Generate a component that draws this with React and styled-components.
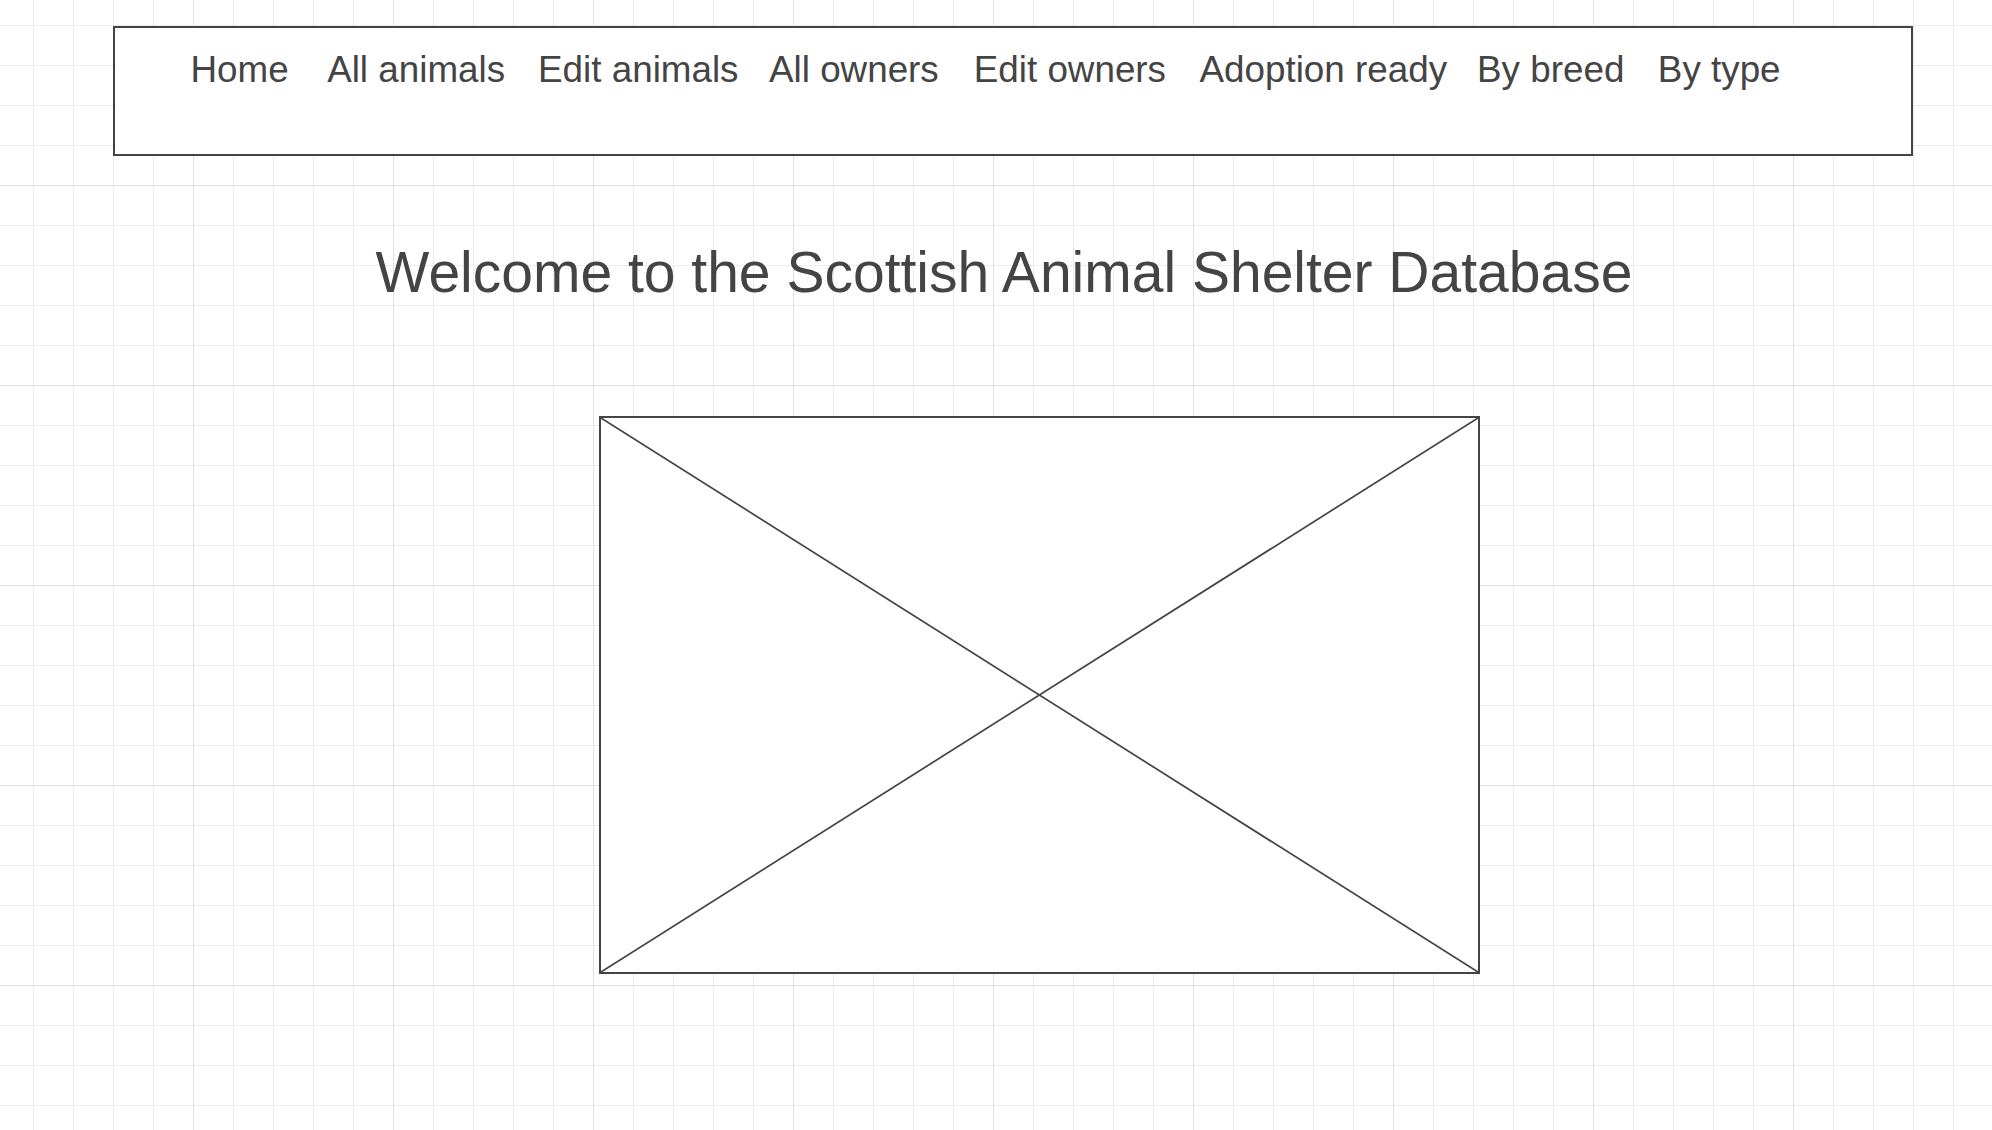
import React from 'react';
import styled, { createGlobalStyle } from 'styled-components';

const GlobalStyle = createGlobalStyle`
    html, body {
        margin: 0;
        padding: 0;
    }

    body {
        min-height: 100vh;
        background-color: #ffffff;
        background-image:
            linear-gradient(to right, #e0e0e0 1px, transparent 1px),
            linear-gradient(to bottom, #e0e0e0 1px, transparent 1px),
            linear-gradient(to right, #ebebeb 1px, transparent 1px),
            linear-gradient(to bottom, #ebebeb 1px, transparent 1px);
        background-size: 200px 200px, 200px 200px, 40px 40px, 40px 40px;
        background-position: 193px 185px, 193px 185px, 33px 25px, 33px 25px;
        font-family: "Liberation Sans", Arial, sans-serif;
        color: #444444;
    }
`;

const navLinks = [
    { label: 'Home', gap: 75.5 },
    { label: 'All animals', gap: 38.5 },
    { label: 'Edit animals', gap: 33 },
    { label: 'All owners', gap: 30.5 },
    { label: 'Edit owners', gap: 35 },
    { label: 'Adoption ready', gap: 33.5 },
    { label: 'By breed', gap: 30 },
    { label: 'By type', gap: 33.5 },
];

const Page = styled.div`
    display: flex;
    flex-direction: column;
    padding-top: 26px;
    min-height: 100vh;
    box-sizing: border-box;
`;

const NavBar = styled.nav`
    display: flex;
    align-items: flex-start;
    box-sizing: border-box;
    width: 1800px;
    height: 130px;
    margin-left: 113px;
    padding-top: 21px;
    background: #ffffff;
    border: 2px solid #444444;
`;

const NavLink = styled.a`
    margin-left: ${props => props.$gap}px;
    font-size: 36.8px;
    line-height: 42px;
    color: #444444;
    text-decoration: none;
    white-space: nowrap;
    cursor: pointer;
`;

const Title = styled.h1`
    margin: 85px 0 0;
    padding-left: 16px;
    font-size: 57px;
    font-weight: 400;
    line-height: 63px;
    text-align: center;
    color: #444444;
`;

const ImagePlaceholder = styled.div`
    box-sizing: border-box;
    width: 881px;
    height: 558px;
    margin: 112px 0 0 599px;
    background: #ffffff;
    border: 2px solid #444444;

    svg {
        display: block;
        width: 100%;
        height: 100%;
    }
`;

export default function App() {
    return (
        <>
            <GlobalStyle />
            <Page>
                <NavBar>
                    {navLinks.map(link => (
                        <NavLink key={link.label} $gap={link.gap}>{link.label}</NavLink>
                    ))}
                </NavBar>
                <Title>Welcome to the Scottish Animal Shelter Database</Title>
                <ImagePlaceholder>
                    <svg viewBox="0 0 877 554" preserveAspectRatio="none">
                        <line x1="0" y1="0" x2="877" y2="554" stroke="#444444" strokeWidth="1.7" />
                        <line x1="877" y1="0" x2="0" y2="554" stroke="#444444" strokeWidth="1.7" />
                    </svg>
                </ImagePlaceholder>
            </Page>
        </>
    );
}
